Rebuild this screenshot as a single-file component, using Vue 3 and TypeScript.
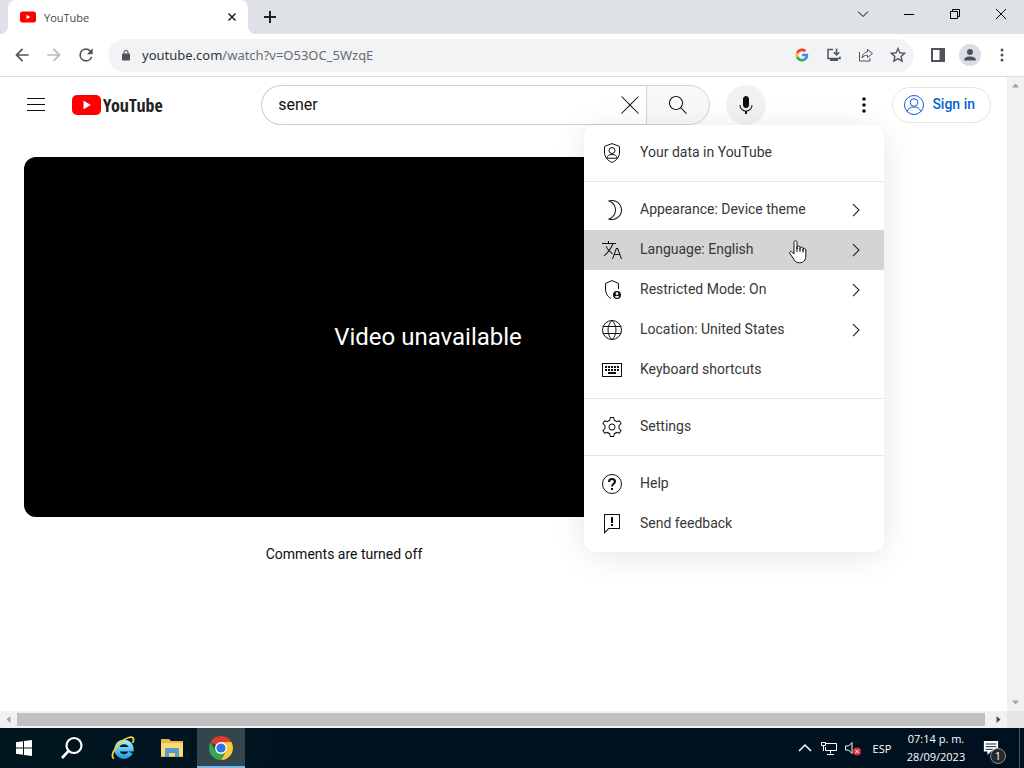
<script setup lang="ts">
import { ref } from 'vue'

interface MenuItem {
  label: string
  icon: string
  more?: boolean
}

const query = ref('sener')
const activeItem = ref('Language: English')

const shapes: Record<string, string> = {
  burger: 'M21,6H3V5h18V6z M21,11H3v1h18V11z M21,17H3v1h18V17z',
  clear:
    'M12.71,12l8.15,8.15l-0.71,0.71L12,12.71l-8.15,8.15l-0.71-0.71L11.29,12L3.15,3.85l0.71-0.71L12,11.29l8.15-8.15l0.71,0.71L12.71,12z',
  search:
    'M20.87,20.17l-5.59-5.59C16.35,13.35,17,11.75,17,10c0-3.87-3.13-7-7-7s-7,3.13-7,7s3.13,7,7,7c1.75,0,3.35-0.65,4.58-1.71l5.59,5.59L20.87,20.17z M10,16c-3.31,0-6-2.69-6-6s2.69-6,6-6s6,2.69,6,6S13.31,16,10,16z',
  mic: 'M12 3C10.34 3 9 4.37 9 6.07V11.93C9 13.63 10.34 15 12 15C13.66 15 15 13.63 15 11.93V6.07C15 4.37 13.66 3 12 3ZM18.5 12H17.5C17.5 15.03 15.03 17.5 12 17.5C8.97 17.5 6.5 15.03 6.5 12H5.5C5.5 15.24 7.89 17.93 11 18.41V21H13V18.41C16.11 17.93 18.5 15.24 18.5 12Z',
  dots: 'M12,16.2a1.8,1.8 0 1 1 0,3.6a1.8,1.8 0 1 1 0,-3.6z M12,10.2a1.8,1.8 0 1 1 0,3.6a1.8,1.8 0 1 1 0,-3.6z M12,4.2a1.8,1.8 0 1 1 0,3.6a1.8,1.8 0 1 1 0,-3.6z',
  moon: 'M12 22C10.93 22 9.87 21.83 8.84 21.48L7.42 21.01L8.84 20.54C12.53 19.31 15 15.88 15 12C15 8.12 12.53 4.69 8.84 3.47L7.42 2.99L8.84 2.52C9.87 2.17 10.93 2 12 2C17.51 2 22 6.49 22 12C22 17.51 17.51 22 12 22ZM10.58 20.89C11.05 20.96 11.53 21 12 21C16.96 21 21 16.96 21 12C21 7.04 16.96 3 12 3C11.53 3 11.05 3.04 10.58 3.11C13.88 4.81 16 8.21 16 12C16 15.79 13.88 19.19 10.58 20.89Z',
  translate:
    'M13.33,6c-1,2.42-2.22,4.65-3.57,6.52l2.98,2.94l-0.7,0.71l-2.88-2.84c-0.53,0.67-1.06,1.28-1.61,1.83l-3.19,3.19l-0.71-0.71l3.19-3.19c0.55-0.55,1.08-1.16,1.6-1.83l-0.16-0.15c-1.11-1.09-1.97-2.44-2.49-3.9l0.94-0.34c0.47,1.32,1.25,2.54,2.25,3.53l0.05,0.05c1.2-1.68,2.29-3.66,3.2-5.81H2V5h6V3h1v2h7v1H13.33z M22,21h-1l-1.49-4h-5.02L13,21h-1l4-11h2L22,21z M19.14,16l-1.86-5h-0.56l-1.86,5H19.14z',
  keyboard:
    'M2,5h20v14H2z M3,6v12h18V6z M5,8h2v2H5z M8,8h2v2H8z M11,8h2v2h-2z M14,8h2v2h-2z M17,8h2v2h-2z M5,11h2v2H5z M8,11h2v2H8z M11,11h2v2h-2z M14,11h2v2h-2z M17,11h2v2h-2z M8,14h8v2H8z',
  settings:
    'M12 9.5c1.38 0 2.5 1.12 2.5 2.5s-1.12 2.5-2.5 2.5-2.5-1.12-2.5-2.5 1.12-2.5 2.5-2.5m0-1c-1.93 0-3.5 1.57-3.5 3.5s1.57 3.5 3.5 3.5 3.5-1.57 3.5-3.5-1.57-3.5-3.5-3.5zM13.22 3l.55 2.2.13.51.5.18c.61.23 1.19.56 1.72.98l.4.32.5-.14 2.17-.62 1.22 2.11-1.63 1.59-.37.36.08.51c.05.32.08.64.08.98s-.03.66-.08.98l-.08.51.37.36 1.63 1.59-1.22 2.11-2.17-.62-.5-.14-.4.32c-.53.43-1.11.76-1.72.98l-.5.18-.13.51-.55 2.24h-2.44l-.55-2.2-.13-.51-.5-.18c-.6-.23-1.18-.56-1.72-.99l-.4-.32-.5.14-2.17.62-1.21-2.12 1.63-1.59.37-.36-.08-.51c-.05-.32-.08-.65-.08-.98s.03-.66.08-.98l.08-.51-.37-.36L3.6 8.56l1.22-2.11 2.17.62.5.14.4-.32c.53-.44 1.11-.77 1.72-.99l.5-.18.13-.51.54-2.21h2.44M14 2h-4l-.74 2.96c-.73.27-1.4.66-2 1.14l-2.92-.83-2 3.46 2.19 2.13c-.06.37-.09.75-.09 1.14s.03.77.09 1.14l-2.19 2.13 2 3.46 2.92-.83c.6.48 1.27.87 2 1.14L10 22h4l.74-2.96c.73-.27 1.4-.66 2-1.14l2.92.83 2-3.46-2.19-2.13c.06-.37.09-.75.09-1.14s-.03-.77-.09-1.14l2.19-2.13-2-3.46-2.92.83c-.6-.48-1.27-.87-2-1.14L14 2z',
  feedback: 'M13 14h-2v-2h2v2zm0-9h-2v6h2V5zm6-2H5v16.59l3.29-3.29.3-.3H19V3m1-1v15H9l-5 5V2h16z',
  chevron: 'M9.4,18.4l-0.7-0.7l5.6-5.6L8.6,6.4l0.7-0.7l6.4,6.4L9.4,18.4z',
  back: 'M20 11H7.83l5.59-5.59L12 4l-8 8 8 8 1.41-1.41L7.83 13H20v-2z',
  forward: 'M12 4l-1.41 1.41L16.17 11H4v2h12.17l-5.58 5.59L12 20l8-8z',
  reload:
    'M17.65 6.35A7.96 7.96 0 0 0 12 4a8 8 0 1 0 7.73 10h-2.08A6 6 0 1 1 12 6c1.66 0 3.14.69 4.22 1.78L13 11h7V4l-2.35 2.35z',
  lock: 'M18 8h-1V6A5 5 0 0 0 7 6v2H6a2 2 0 0 0-2 2v10c0 1.1.9 2 2 2h12a2 2 0 0 0 2-2V10a2 2 0 0 0-2-2zM9 6a3 3 0 0 1 6 0v2H9V6z',
  star: 'M22 9.24l-7.19-.62L12 2 9.19 8.63 2 9.24l5.46 4.73L5.82 21 12 17.27 18.18 21l-1.63-7.03L22 9.24zM12 15.4l-3.76 2.27 1-4.28-3.32-2.88 4.38-.38L12 6.1l1.71 4.04 4.38.38-3.32 2.88 1 4.28L12 15.4z',
}

const outlines: Record<string, string> = {
  data: 'M12 2.6L19.5 5.4V11c0 5-3 8.7-7.5 10.4C7.5 19.7 4.5 16 4.5 11V5.4z M12 6.5a3 3 0 1 1 0 6a3 3 0 1 1 0-6z M6.8 17.2c.4-2.4 2.2-3.7 5.2-3.7s4.8 1.3 5.2 3.7z',
  restricted: 'M18.5 11V5.4L12 2.6 5.500 5.4V11c0 4.5 2 7.6 5.500 9.5',
  globe:
    'M12 2.5a9.5 9.5 0 1 1 0 19a9.5 9.5 0 1 1 0-19z M12 2.5c5.3 4.5 5.3 14.5 0 19c-5.3-4.5-5.3-14.5 0-19z M3.2 8.5h17.6 M3.2 15.5h17.6',
  help: 'M12 2.5a9.5 9.5 0 1 1 0 19a9.5 9.5 0 1 1 0-19z',
}

const sections: MenuItem[][] = [
  [{ label: 'Your data in YouTube', icon: 'data' }],
  [
    { label: 'Appearance: Device theme', icon: 'moon', more: true },
    { label: 'Language: English', icon: 'translate', more: true },
    { label: 'Restricted Mode: On', icon: 'restricted', more: true },
    { label: 'Location: United States', icon: 'globe', more: true },
    { label: 'Keyboard shortcuts', icon: 'keyboard' },
  ],
  [{ label: 'Settings', icon: 'settings' }],
  [
    { label: 'Help', icon: 'help' },
    { label: 'Send feedback', icon: 'feedback' },
  ],
]
</script>

<template>
  <div class="desktop">
    <div class="tabstrip">
      <div class="tab">
        <svg class="favicon" viewBox="0 0 16 16">
          <rect y="2.5" width="16" height="11" rx="2.5" fill="#f00" />
          <path d="M6.5 5.8v4.4L10.3 8z" fill="#fff" />
        </svg>
        <span class="tab-title">YouTube</span>
        <button class="tab-close" aria-label="Close tab">
          <svg viewBox="0 0 16 16"><path d="M4.5 4.5l7 7M11.500 4.5l-7 7" class="line w15" /></svg>
        </button>
      </div>
      <button class="new-tab" aria-label="New tab">
        <svg viewBox="0 0 16 16"><path d="M8 2v12M2 8h12" class="line w2" /></svg>
      </button>
      <div class="window-controls">
        <button aria-label="Search tabs">
          <svg viewBox="0 0 16 16"><path d="M3 5.500l5 5 5-5" class="line" /></svg>
        </button>
        <button aria-label="Minimize">
          <svg viewBox="0 0 16 16"><path d="M3 8.500h10" class="line" /></svg>
        </button>
        <button aria-label="Restore">
          <svg viewBox="0 0 16 16"><path d="M3.500 5.500h7v7h-7zM5.500 5.500v-2h7v7h-2" class="line" /></svg>
        </button>
        <button aria-label="Close">
          <svg viewBox="0 0 16 16"><path d="M3 3l10 10M13 3L3 13" class="line" /></svg>
        </button>
      </div>
    </div>

    <div class="toolbar">
      <button class="tool" aria-label="Back"><svg viewBox="0 0 24 24"><path :d="shapes.back" /></svg></button>
      <button class="tool faded" aria-label="Forward"><svg viewBox="0 0 24 24"><path :d="shapes.forward" /></svg></button>
      <button class="tool" aria-label="Reload"><svg viewBox="0 0 24 24"><path :d="shapes.reload" /></svg></button>
      <div class="omnibox">
        <svg class="lock" viewBox="0 0 24 24"><path :d="shapes.lock" /></svg>
        <span class="url">youtube.com<span class="url-path">/watch?v=O53OC_5WzqE</span></span>
        <button class="tool" aria-label="Google">
          <svg class="google" viewBox="0 0 24 24">
            <path fill="#4285f4" d="M22.56 12.25c0-.78-.07-1.53-.2-2.25H12v4.26h5.92c-.26 1.37-1.04 2.53-2.21 3.31v2.77h3.57c2.08-1.92 3.28-4.74 3.28-8.09z" />
            <path fill="#34a853" d="M12 23c2.97 0 5.46-.98 7.28-2.66l-3.57-2.77c-.98.66-2.23 1.06-3.71 1.06-2.86 0-5.29-1.93-6.16-4.53H2.18v2.84C3.99 20.53 7.7 23 12 23z" />
            <path fill="#fbbc05" d="M5.84 14.09c-.22-.66-.35-1.36-.35-2.09s.13-1.43.35-2.09V7.07H2.18C1.43 8.55 1 10.22 1 12s.43 3.45 1.18 4.93l3.66-2.84z" />
            <path fill="#ea4335" d="M12 5.38c1.62 0 3.06.56 4.21 1.64l3.15-3.15C17.45 2.09 14.97 1 12 1 7.7 1 3.99 3.47 2.18 7.07l3.66 2.84c.87-2.6 3.3-4.53 6.16-4.53z" />
          </svg>
        </button>
        <button class="tool" aria-label="Install YouTube">
          <svg viewBox="0 0 16 16">
            <path d="M7 2.500H2v9h12V9.500M10.500 1.500v6M7.800 5.200l2.700 2.700 2.700-2.700" class="line w15" />
            <path d="M4 12h8v2H4z" />
          </svg>
        </button>
        <button class="tool" aria-label="Share this page">
          <svg viewBox="0 0 16 16">
            <path d="M1.500 5v9H12v-3M9.500 2.500l5 4-5 4V8.300C7 8.300 5.200 9 4 11c.3-3.500 2.200-5.700 5.500-6.100z" class="line" />
          </svg>
        </button>
        <button class="tool" aria-label="Bookmark this tab"><svg viewBox="0 0 24 24"><path :d="shapes.star" /></svg></button>
      </div>
      <button class="tool" aria-label="Side panel">
        <svg viewBox="0 0 16 16"><path d="M1 1h14v14H1zM3 3v10h6.500V3z" fill-rule="evenodd" /></svg>
      </button>
      <button class="tool avatar" aria-label="Profile">
        <svg viewBox="0 0 16 16"><circle cx="8" cy="5" r="3" /><path d="M2 13.500c0-2.700 2.500-4 6-4s6 1.300 6 4z" /></svg>
      </button>
      <button class="tool" aria-label="Chrome menu"><svg viewBox="0 0 24 24"><path :d="shapes.dots" /></svg></button>
    </div>

    <div class="viewport">
      <main class="page">
        <header class="masthead">
          <div class="brand">
            <button class="round" aria-label="Guide"><svg viewBox="0 0 24 24"><path :d="shapes.burger" /></svg></button>
            <a class="logo" href="#">
              <svg viewBox="0 0 29 20">
                <rect width="29" height="20" rx="5" fill="#f00" />
                <path d="M11.500 5.700v8.600l7.400-4.300z" fill="#fff" />
              </svg>
              <span>YouTube</span>
            </a>
          </div>
          <div class="finder">
            <form class="search" @submit.prevent>
              <div class="search-field">
                <input v-model="query" type="text" aria-label="Search" />
                <button type="button" class="clear" aria-label="Clear search" @click="query = ''">
                  <svg viewBox="0 0 24 24"><path :d="shapes.clear" /></svg>
                </button>
              </div>
              <button class="search-go" aria-label="Search"><svg viewBox="0 0 24 24"><path :d="shapes.search" /></svg></button>
            </form>
            <button class="round voice" aria-label="Search with your voice"><svg viewBox="0 0 24 24"><path :d="shapes.mic" /></svg></button>
          </div>
          <div class="account">
            <button class="round" aria-label="Settings menu"><svg viewBox="0 0 24 24"><path :d="shapes.dots" /></svg></button>
            <a class="sign-in" href="#">
              <svg viewBox="0 0 24 24">
                <path d="M12 2.500a9.500 9.500 0 1 1 0 19a9.500 9.500 0 1 1 0-19z M12 5.700a3.800 3.800 0 1 1 0 7.600a3.800 3.800 0 1 1 0-7.600z M5.200 18.500c.8-3 3.300-4.500 6.800-4.500s6 1.500 6.800 4.500" class="line" />
              </svg>
              <span>Sign in</span>
            </a>
          </div>
        </header>

        <section class="player">Video unavailable</section>
        <p class="comments">Comments are turned off</p>

        <nav class="menu">
          <div v-for="(section, index) in sections" :key="index" class="menu-section">
            <button
              v-for="item in section"
              :key="item.label"
              class="menu-item"
              :class="{ active: item.label === activeItem }"
              @mouseenter="activeItem = item.label"
            >
              <svg viewBox="0 0 24 24">
                <path v-if="shapes[item.icon]" :d="shapes[item.icon]" :fill-rule="item.icon === 'keyboard' ? 'evenodd' : 'nonzero'" />
                <path v-else :d="outlines[item.icon]" class="line" />
                <template v-if="item.icon === 'help'">
                  <path d="M9 10C9 8 10.300 7 12 7s3 1 3 2.700c0 2-3 2.200-3 4.800" class="line w2" />
                  <path d="M11 16h2v2h-2z" />
                </template>
                <path
                  v-if="item.icon === 'restricted'"
                  fill-rule="evenodd"
                  d="M17 13a4 4 0 1 1 0 8a4 4 0 1 1 0-8z M17 14.200a1.400 1.400 0 1 0 0 2.800a1.400 1.400 0 1 0 0-2.800z M14.700 18.700c1 1.500 3.600 1.500 4.600 0c-1-1.200-3.600-1.200-4.600 0z"
                />
              </svg>
              <span class="menu-label">{{ item.label }}</span>
              <svg v-if="item.more" viewBox="0 0 24 24"><path :d="shapes.chevron" /></svg>
            </button>
          </div>
        </nav>
        <svg class="pointer" viewBox="0 0 20 26">
          <path
            d="M6 15V3.500C6 1 9 1 9 3.500V10V8.300c0-1.800 3-1.600 3 .2V10.500V9.200c0-1.700 3-1.500 3 .3V11.500v-1.300c0-1.400 2.800-1.200 2.800.8V17c0 4-2.300 6.800-6.300 6.800c-3.500 0-5-1.800-6.500-4.800L1.800 14.500c-.8-1.800 1.400-2.700 2.600-1.300z"
            fill="#fff"
            stroke="#111"
          />
          <path d="M9 9v4M12 10v3M15 11v2.500" class="line" />
        </svg>
      </main>
      <div class="vscroll">
        <svg viewBox="0 0 17 17"><path d="M5 10.500h7L8.500 6.500z" fill="#a3a3a3" /></svg>
        <svg viewBox="0 0 17 17"><path d="M5 6.500h7l-3.500 4z" fill="#a3a3a3" /></svg>
      </div>
    </div>

    <div class="hscroll">
      <svg viewBox="0 0 17 17"><path d="M10.500 5v7L6.500 8.500z" fill="#a3a3a3" /></svg>
      <div class="track"><div class="thumb"></div></div>
      <svg viewBox="0 0 17 17"><path d="M6.500 5v7l4-3.500z" fill="#505050" /></svg>
      <div class="corner"></div>
    </div>

    <footer class="taskbar">
      <div class="system">
        <button aria-label="Start">
          <svg class="s16" viewBox="0 0 16 16">
            <path d="M0 2.300L7 1.300v6.200H0zM8 1.100L16 0v7.500H8zM0 8.500h7v6.200l-7-1zM8 8.500h8V16l-8-1.100z" fill="#fff" />
          </svg>
        </button>
        <button aria-label="Search Windows">
          <svg class="s24" viewBox="0 0 24 24">
            <circle cx="14" cy="9.500" r="7.500" fill="none" stroke="#fff" stroke-width="2.200" />
            <path d="M8.500 15L2 22" stroke="#fff" stroke-width="2.600" />
          </svg>
        </button>
      </div>
      <div class="apps">
        <button aria-label="Internet Explorer">
          <svg class="s24" viewBox="0 0 24 24">
            <defs>
              <linearGradient id="ie" x1="0" y1="0" x2="0" y2="1">
                <stop offset="0" stop-color="#9be8fc" />
                <stop offset="1" stop-color="#2ba4e0" />
              </linearGradient>
            </defs>
            <path d="M19.500 16.500A7.300 7.300 0 1 1 20.300 13.200H7" fill="none" stroke="url(#ie)" stroke-width="4.600" />
            <path d="M3 22.500C-1 21 3 12 10 6C15 1.500 22 -.5 22.500 3c.2 1.300-.2 2.500-.8 3.800" fill="none" stroke="#f5cf3b" stroke-width="1.800" />
          </svg>
        </button>
        <button aria-label="File Explorer">
          <svg class="s24" viewBox="0 0 24 24">
            <path d="M1 3h8l2 2h12v16H1z" fill="#e9b64b" />
            <path d="M1 7h22v13H1z" fill="#fbd973" />
            <path d="M5 21v-8q0-1 1-1h12q1 0 1 1v8h-4v-4H9v4z" fill="#4f9ed0" />
          </svg>
        </button>
        <button class="running" aria-label="Google Chrome">
          <svg class="s24" viewBox="0 0 24 24">
            <path d="M12 12L1.610 6A12 12 0 0 1 22.390 6z" fill="#e33b2e" />
            <path d="M12 12V6h10.390A12 12 0 0 1 12 24l5.200-9z" fill="#fcc934" />
            <path d="M1.610 6A12 12 0 0 0 12 24l5.200-9L12 12 6.800 15z" fill="#34a853" />
            <circle cx="12" cy="12" r="6" fill="#fff" />
            <circle cx="12" cy="12" r="4.600" fill="#2f74e0" />
          </svg>
        </button>
      </div>
      <div class="tray">
        <button aria-label="Show hidden icons">
          <svg class="s16" viewBox="0 0 16 16"><path d="M2 11l6-6 6 6" class="line w15" /></svg>
        </button>
        <button aria-label="Network">
          <svg class="s16" viewBox="0 0 16 16">
            <path d="M5 3.500h10.500v7H4.500V7M9.500 10.500v3M6 14.500h7M.5 2.500h4v3h-4zM2.500 5.500v5.500" class="line" />
          </svg>
        </button>
        <button aria-label="Volume muted">
          <svg class="s16" viewBox="0 0 16 16">
            <path d="M.5 6h3l3.500-3.500v11L3.500 10h-3z" class="line" />
            <circle cx="12" cy="11.500" r="4" fill="#d62f3d" />
            <path d="M10.200 9.700l3.600 3.600M13.800 9.700l-3.600 3.600" class="line" />
          </svg>
        </button>
        <button class="lang">ESP</button>
        <button class="clock"><span>07:14 p. m.</span><span>28/09/2023</span></button>
        <button class="notices" aria-label="Notifications">
          <svg class="s16" viewBox="0 0 18 18">
            <path d="M1 1h16v12H9l-4 4v-4H1z" fill="#fff" />
            <path d="M3 4.500h12M3 7.500h12M3 10.500h8" stroke="#001020" />
          </svg>
          <span class="badge">1</span>
        </button>
        <div class="peek"></div>
      </div>
    </footer>
  </div>
</template>

<style>
body {
  margin: 0;
}
</style>

<style scoped>
.desktop {
  display: flex;
  flex-direction: column;
  height: 100vh;
  overflow: hidden;
  background: #fff;
  font-family: 'Open Sans', 'Noto Sans', sans-serif;
  color: #202124;
}
button {
  display: flex;
  align-items: center;
  justify-content: center;
  flex-shrink: 0;
  margin: 0;
  padding: 0;
  border: 0;
  background: none;
  color: inherit;
  font: inherit;
}
a {
  color: inherit;
  text-decoration: none;
}
svg {
  display: block;
  flex-shrink: 0;
  fill: currentColor;
}
.line {
  fill: none;
  stroke: currentColor;
  stroke-width: 1;
}
.w15 {
  stroke-width: 1.5;
}
.w2 {
  stroke-width: 2;
}

.tabstrip {
  display: flex;
  height: 34px;
  padding-left: 8px;
  background: #dee1e6;
}
.tab {
  position: relative;
  display: flex;
  align-items: center;
  gap: 8px;
  box-sizing: border-box;
  width: 240px;
  padding: 0 8px 0 12px;
  border-radius: 8px 8px 0 0;
  background: #fff;
}
.tab::before,
.tab::after {
  content: '';
  position: absolute;
  bottom: 0;
  width: 8px;
  height: 8px;
}
.tab::before {
  right: 100%;
  background: radial-gradient(circle at 0 0, transparent 8px, #fff 8px);
}
.tab::after {
  left: 100%;
  background: radial-gradient(circle at 100% 0, transparent 8px, #fff 8px);
}
.favicon {
  width: 16px;
  height: 16px;
}
.tab-title {
  flex: 1;
  font-size: 11px;
  color: #45494d;
}
.tab-close svg,
.new-tab svg,
.window-controls svg {
  width: 16px;
  height: 16px;
}
.new-tab {
  width: 28px;
  margin-left: 8px;
}
.window-controls {
  display: flex;
  height: 28px;
  margin-left: auto;
  color: #000;
}
.window-controls button {
  width: 46px;
}

.toolbar {
  display: flex;
  align-items: center;
  height: 42px;
  padding: 0 6px;
  border-bottom: 1px solid #dadce0;
  background: #fff;
  color: #50545a;
}
.tool {
  width: 32px;
  height: 32px;
}
.tool svg {
  width: 20px;
  height: 20px;
}
.tool svg[viewBox='0 0 16 16'] {
  width: 16px;
  height: 16px;
}
.tool .google {
  width: 14px;
  height: 14px;
}
.faded {
  color: #b9bbbe;
}
.avatar svg {
  padding: 3px;
  border-radius: 50%;
  background: #dadde5;
}
.omnibox {
  display: flex;
  flex: 1;
  align-items: center;
  height: 33px;
  margin: 0 8px 0 6px;
  border-radius: 17px;
  background: #f1f3f4;
}
.lock {
  width: 12px;
  height: 13px;
  margin: 0 10px 0 12px;
}
.url {
  flex: 1;
  font-family: 'Noto Sans', 'Open Sans', sans-serif;
  font-size: 13px;
  color: #303338;
}
.url-path {
  color: #686c71;
}

.viewport {
  display: flex;
  flex: 1;
  min-height: 0;
}
.page {
  position: relative;
  flex: 1;
  min-width: 0;
  font-family: Roboto, 'Liberation Sans', sans-serif;
  color: #0f0f0f;
}
.masthead {
  display: flex;
  align-items: center;
  justify-content: space-between;
  height: 56px;
  padding: 0 16px;
}
.masthead svg {
  width: 24px;
  height: 24px;
}
.brand {
  display: flex;
  align-items: center;
  gap: 16px;
  min-width: 167px;
}
.round {
  width: 40px;
  height: 40px;
  border-radius: 50%;
}
.logo {
  display: flex;
  align-items: center;
  gap: 2px;
  font-family: 'Liberation Sans Narrow', 'Open Sans Condensed', 'Roboto Condensed', Roboto, sans-serif;
  font-size: 18px;
  font-weight: 700;
  color: #212121;
}
.masthead .logo svg {
  width: 29px;
  height: 20px;
}
.finder {
  display: flex;
  gap: 16px;
}
.search {
  display: flex;
  width: 449px;
  height: 40px;
}
.search-field {
  display: flex;
  flex: 1;
  align-items: center;
  box-sizing: border-box;
  min-width: 0;
  padding: 0 4px 0 16px;
  border: 1px solid #ccc;
  border-right: 0;
  border-radius: 20px 0 0 20px;
}
.search-field input {
  flex: 1;
  min-width: 0;
  padding: 0 0 2px;
  border: 0;
  outline: 0;
  background: none;
  font: 16px Roboto, sans-serif;
  color: #111;
}
.search-go {
  box-sizing: border-box;
  width: 64px;
  border: 1px solid #d3d3d3;
  border-radius: 0 20px 20px 0;
  background: #f8f8f8;
}
.clear {
  width: 24px;
}
.voice {
  background: #f2f2f2;
}
.account {
  display: flex;
  align-items: center;
  gap: 8px;
}
.sign-in {
  display: flex;
  align-items: center;
  gap: 6px;
  box-sizing: border-box;
  height: 36px;
  padding: 0 15px 0 9px;
  border: 1px solid #e5e5e5;
  border-radius: 18px;
  font-size: 14px;
  font-weight: 500;
  color: #065fd4;
}
.sign-in span {
  padding-bottom: 2px;
}
.player {
  display: flex;
  align-items: center;
  justify-content: center;
  width: min(808px, 100% - 48px);
  height: 360px;
  margin: 24px 24px 0;
  border-radius: 12px;
  background: #000;
  font-size: 24px;
  color: #fff;
}
.comments {
  width: 640px;
  margin: 27px 24px 0;
  font-size: 14px;
  line-height: 20px;
  text-align: center;
}
.menu {
  position: absolute;
  top: 48px;
  right: 123px;
  width: 300px;
  border-radius: 12px;
  background: #fff;
  box-shadow: 0 4px 32px rgba(0, 0, 0, 0.1);
}
.menu-section {
  padding: 8px 0;
}
.menu-section + .menu-section {
  border-top: 1px solid #e5e5e5;
}
.menu-item {
  gap: 16px;
  width: 100%;
  height: 40px;
  padding: 0 16px;
  font-size: 14px;
  line-height: 20px;
  text-align: left;
}
.menu-item svg {
  width: 24px;
  height: 24px;
}
.menu-item.active {
  background: #d4d4d4;
}
.menu-label {
  flex: 1;
  padding-bottom: 2px;
  color: #383838;
}
.pointer {
  position: absolute;
  top: 162px;
  right: 199px;
  width: 20px;
  height: 26px;
}
.vscroll {
  display: flex;
  flex-direction: column;
  justify-content: space-between;
  width: 17px;
  background: #f1f1f1;
}
.vscroll svg,
.hscroll svg {
  width: 17px;
  height: 17px;
}
.hscroll {
  display: flex;
  height: 17px;
  background: #f1f1f1;
}
.track {
  flex: 1;
  padding: 2px 0;
}
.thumb {
  width: calc(100% - 5px);
  height: 13px;
  background: #c1c1c1;
}
.corner {
  width: 17px;
  background: #e6e6e6;
}

.taskbar {
  display: flex;
  height: 40px;
  background: linear-gradient(90deg, #00161f, #00101f);
  color: #fff;
}
.system,
.apps,
.tray {
  display: flex;
}
.system button,
.apps button {
  width: 48px;
}
.apps {
  gap: 1px;
  margin-left: 3px;
}
.running {
  box-sizing: border-box;
  border-top: 2px solid #33464d;
  border-bottom: 2px solid #76b9ed;
  background: #33464d;
}
.s16 {
  width: 16px;
  height: 16px;
}
.s24 {
  width: 24px;
  height: 24px;
}
.tray {
  margin-left: auto;
  font-size: 11px;
}
.tray button {
  width: 24px;
}
.tray .lang {
  width: 34px;
}
.tray .clock {
  flex-direction: column;
  width: 74px;
  line-height: 18px;
}
.tray .notices {
  position: relative;
  box-sizing: border-box;
  width: 46px;
  padding-right: 10px;
}
.badge {
  position: absolute;
  right: 13px;
  bottom: 4px;
  width: 14px;
  height: 14px;
  border: 1px solid #8c8f94;
  border-radius: 50%;
  background: #26282c;
  font-size: 11px;
  line-height: 14px;
  text-align: center;
}
.peek {
  width: 4px;
  border-left: 1px solid #4a5560;
}
</style>
